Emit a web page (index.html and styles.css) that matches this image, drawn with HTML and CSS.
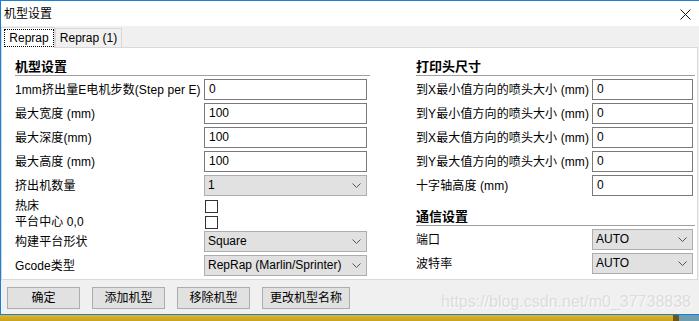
FILE: index.html
```html
<!DOCTYPE html>
<html lang="zh">
<head>
<meta charset="utf-8">
<title>机型设置</title>
<link rel="stylesheet" href="styles.css">
</head>
<body>
<div class="window">
  <header class="titlebar">
    <span class="title">机型设置</span>
    <svg class="close" width="11" height="11" viewBox="0 0 11 11"><path d="M0.5 0.5L10.5 10.5M10.5 0.5L0.5 10.5" stroke="#111" stroke-width="1" fill="none"/></svg>
  </header>
  <nav class="tabs">
    <div class="tab tab-active"><span class="focus">Reprap</span></div>
    <div class="tab">Reprap (1)</div>
  </nav>
  <main class="panel">
    <section class="col col-left">
      <h2 class="section-head">机型设置</h2>
      <div class="row"><span class="lbl">1mm挤出量E电机步数(Step per E)</span><div class="input">0</div></div>
      <div class="row"><span class="lbl">最大宽度 (mm)</span><div class="input">100</div></div>
      <div class="row"><span class="lbl">最大深度(mm)</span><div class="input">100</div></div>
      <div class="row"><span class="lbl">最大高度 (mm)</span><div class="input">100</div></div>
      <div class="row"><span class="lbl">挤出机数量</span><div class="select"><span>1</span><svg class="chev" width="9" height="5" viewBox="0 0 9 5"><path d="M0.5 0.5L4.5 4.5L8.5 0.5" stroke="#555" fill="none"/></svg></div></div>
      <div class="row row-check"><span class="lbl">热床</span><span class="checkbox"></span></div>
      <div class="row row-check"><span class="lbl">平台中心 0,0</span><span class="checkbox"></span></div>
      <div class="row"><span class="lbl">构建平台形状</span><div class="select"><span>Square</span><svg class="chev" width="9" height="5" viewBox="0 0 9 5"><path d="M0.5 0.5L4.5 4.5L8.5 0.5" stroke="#555" fill="none"/></svg></div></div>
      <div class="row"><span class="lbl">Gcode类型</span><div class="select"><span>RepRap (Marlin/Sprinter)</span><svg class="chev" width="9" height="5" viewBox="0 0 9 5"><path d="M0.5 0.5L4.5 4.5L8.5 0.5" stroke="#555" fill="none"/></svg></div></div>
    </section>
    <section class="col col-right">
      <h2 class="section-head">打印头尺寸</h2>
      <div class="row"><span class="lbl">到X最小值方向的喷头大小 (mm)</span><div class="input">0</div></div>
      <div class="row"><span class="lbl">到Y最小值方向的喷头大小 (mm)</span><div class="input">0</div></div>
      <div class="row"><span class="lbl">到X最大值方向的喷头大小 (mm)</span><div class="input">0</div></div>
      <div class="row"><span class="lbl">到Y最大值方向的喷头大小 (mm)</span><div class="input">0</div></div>
      <div class="row"><span class="lbl">十字轴高度 (mm)</span><div class="input">0</div></div>
      <h2 class="section-head section-head-2">通信设置</h2>
      <div class="row"><span class="lbl">端口</span><div class="select"><span>AUTO</span><svg class="chev" width="9" height="5" viewBox="0 0 9 5"><path d="M0.5 0.5L4.5 4.5L8.5 0.5" stroke="#555" fill="none"/></svg></div></div>
      <div class="row"><span class="lbl">波特率</span><div class="select"><span>AUTO</span><svg class="chev" width="9" height="5" viewBox="0 0 9 5"><path d="M0.5 0.5L4.5 4.5L8.5 0.5" stroke="#555" fill="none"/></svg></div></div>
    </section>
  </main>
  <footer class="footer">
    <button class="btn">确定</button>
    <button class="btn">添加机型</button>
    <button class="btn">移除机型</button>
    <button class="btn btn-wide">更改机型名称</button>
    <span class="watermark">https://blog.csdn.net/m0_37738838</span>
  </footer>
</div>
<div class="desktop"><div class="bar-yellow"></div><div class="bar-dark"></div><div class="bar-teal"></div></div>
</body>
</html>
```
FILE: styles.css
```css
html, body {
  margin: 0;
  padding: 0;
}
body {
  width: 699px;
  height: 321px;
  overflow: hidden;
  background: #6c9db0;
  font-family: "Liberation Sans", "Noto Sans CJK SC", sans-serif;
  font-size: 12px;
  color: #000;
}
.window {
  box-sizing: border-box;
  width: 700px;
  height: 315px;
  border: 1px solid #1c7fd6;
  background: #f0f0f0;
  display: flex;
  flex-direction: column;
}
.titlebar {
  height: 25px;
  flex: none;
  background: #fff;
  display: flex;
  align-items: center;
  padding-left: 3px;
}
.title {
  font-size: 12px;
  line-height: 14px;
  padding-top: 1px;
}
.close {
  margin-left: auto;
  margin-right: 8px;
  margin-top: 1px;
}
.tabs {
  height: 21px;
  flex: none;
  display: flex;
  align-items: flex-end;
}
.tab {
  box-sizing: border-box;
  height: 19px;
  width: 67px;
  border: 1px solid #d9d9d9;
  border-bottom: none;
  background: #f0f0f0;
  display: flex;
  align-items: center;
  justify-content: center;
  line-height: 14px;
}
.tab-active {
  width: 54px;
  height: 21px;
  margin-bottom: -1px;
  background: #fff;
  position: relative;
  z-index: 1;
  padding: 1px 0 1px 2px;
  align-items: stretch;
}
.focus {
  flex: 1;
  border: 1px dotted #000;
  display: flex;
  align-items: center;
  justify-content: center;
}
.panel {
  box-sizing: border-box;
  height: 233px;
  flex: none;
  margin-right: 1px;
  border: 1px solid #d9d9d9;
  background: #fff;
  display: flex;
  padding-left: 13px;
}
.col {
  display: flex;
  flex-direction: column;
  gap: 3px;
}
.col-left {
  width: 355px;
}
.col-right {
  width: 279px;
  margin-left: 46px;
}
.section-head {
  box-sizing: border-box;
  margin: 0;
  height: 28px;
  border-bottom: 1px solid #a0a0a0;
  font-size: 13px;
  font-weight: bold;
  line-height: 15px;
  display: flex;
  align-items: flex-end;
  padding-bottom: 1px;
}
.section-head-2 {
  height: 27px;
}
.row {
  display: grid;
  grid-template-columns: 189px 163px;
  align-items: center;
  height: 21px;
}
.col-right .row {
  grid-template-columns: 176px 101px;
}
.row-check {
  height: 13px;
}
.lbl {
  white-space: nowrap;
  line-height: 14px;
  letter-spacing: 0.1px;
}
.input {
  box-sizing: border-box;
  height: 21px;
  border: 1px solid #7a7a7a;
  background: #fff;
  padding-left: 4px;
  line-height: 19px;
}
.select {
  box-sizing: border-box;
  height: 21px;
  border: 1px solid #adadad;
  background: #e1e1e1;
  padding: 0 5px 0 3px;
  display: flex;
  align-items: center;
  justify-content: space-between;
  line-height: 19px;
}
.chev {
  flex: none;
}
.checkbox {
  box-sizing: border-box;
  width: 13px;
  height: 13px;
  margin-left: 1px;
  border: 1px solid #333;
  background: #fff;
}
.footer {
  position: relative;
  flex: 1;
  display: flex;
  align-items: flex-start;
  gap: 12px;
  padding: 7px 0 0 6px;
}
.btn {
  box-sizing: border-box;
  width: 73px;
  height: 22px;
  border: 1px solid #adadad;
  background: #e1e1e1;
  font-family: "Liberation Sans", "Noto Sans CJK SC", sans-serif;
  font-size: 12px;
  color: #000;
  padding: 0;
  margin: 0;
  line-height: 20px;
}
.btn-wide {
  width: 88px;
}
.watermark {
  position: absolute;
  right: 8px;
  top: 13px;
  font-family: "Liberation Sans", sans-serif;
  font-size: 16px;
  line-height: 18px;
  color: #dcdcdc;
  text-shadow: 1px 1px 0 #fbfbfb;
}
.desktop {
  display: flex;
  height: 6px;
}
.bar-yellow {
  width: 673px;
  background: linear-gradient(#dcb52c, #c9a21c);
}
.bar-dark {
  width: 6px;
  background: #6e5416;
}
.bar-teal {
  flex: 1;
  background: #6c9db0;
}
```
